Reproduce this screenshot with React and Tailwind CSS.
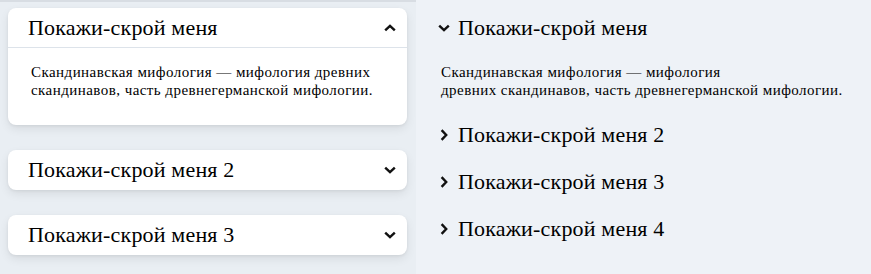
import React from "react";

function Chevron({ dir = "down", className = "" }) {
  const rot =
    dir === "up" ? "rotate-180" : dir === "right" ? "-rotate-90" : "";
  return (
    <svg
      width="12"
      height="12"
      viewBox="0 0 12 12"
      className={`${rot} ${className}`}
      fill="none"
      stroke="#111"
      strokeWidth="2.4"
      strokeLinecap="butt"
      strokeLinejoin="miter"
    >
      <polyline points="1.2,3.6 6,8.2 10.8,3.6" />
    </svg>
  );
}

const body =
  "Скандинавская мифология — мифология древних скандинавов, часть древнегерманской мифологии.";

function Card({ title, open }) {
  return (
    <div className="bg-white rounded-lg shadow-[0_4px_10px_rgba(0,0,0,0.08),0_1px_3px_rgba(0,0,0,0.06)]">
      <div
        className={`h-[40px] flex items-center justify-between pl-[20px] pr-[11px] ${
          open ? "border-b border-[#dde3ea]" : ""
        }`}
      >
        <span className="font-['Liberation_Serif',serif] text-[22px] tracking-[0.18px] text-black leading-none">
          {title}
        </span>
        <Chevron dir={open ? "up" : "down"} />
      </div>
      {open && (
        <div className="font-['Liberation_Serif',serif] pl-[23px] pr-[20px] pt-[15px] pb-[26px] text-[15px] tracking-[0.45px] leading-[18px] text-black">
          {body}
        </div>
      )}
    </div>
  );
}

function Row({ title, open }) {
  return (
    <div className="h-[40px] flex items-center gap-[8px]">
      <Chevron dir={open ? "down" : "right"} />
      <span className="font-['Liberation_Serif',serif] text-[22px] tracking-[0.18px] text-black leading-none">
        {title}
      </span>
    </div>
  );
}

export default function App() {
  return (
    <div className="flex w-[871px] h-[274px] overflow-hidden font-['Liberation_Serif',serif]">
      <div className="w-[416px] shrink-0 bg-[#e9eef3] border-t-2 border-[#d8dde3] pt-[6px] pl-[8px] pr-[9px] flex flex-col gap-[25px]">
        <Card title="Покажи-скрой меня" open />
        <Card title="Покажи-скрой меня 2" />
        <Card title="Покажи-скрой меня 3" />
      </div>
      <div className="flex-1 bg-[#eef2f7] pt-[8px] pl-[22px]">
        <Row title="Покажи-скрой меня" open />
        <div className="font-['Liberation_Serif',serif] pl-[3px] pt-[15px] pb-[16px] text-[15px] tracking-[0.45px] leading-[18px] text-black">
          Скандинавская мифология — мифология
          <br />
          древних скандинавов, часть древнегерманской мифологии.
        </div>
        <div className="flex flex-col gap-[7px]">
          <Row title="Покажи-скрой меня 2" />
          <Row title="Покажи-скрой меня 3" />
          <Row title="Покажи-скрой меня 4" />
        </div>
      </div>
    </div>
  );
}
